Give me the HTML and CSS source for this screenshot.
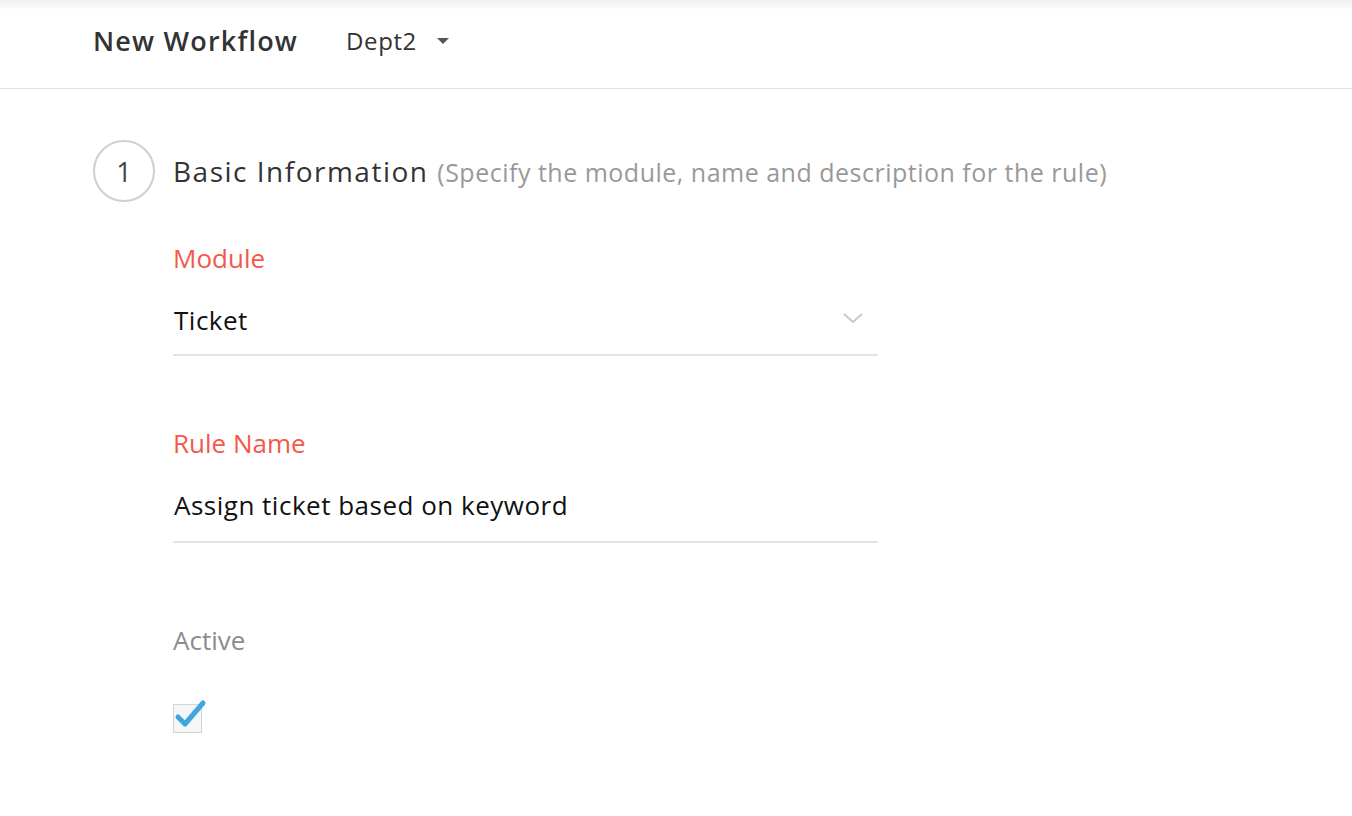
FILE: index.html
```html
<!DOCTYPE html>
<html>
<head>
<meta charset="utf-8">
<link rel="stylesheet" href="styles.css">
</head>
<body>
<header class="topbar">
  <h1 class="title">New Workflow</h1>
  <div class="dept">
    <span>Dept2</span>
    <svg class="caret" width="12" height="6" viewBox="0 0 12 6"><path d="M0 0 L12 0 L6 6 Z" fill="#555"/></svg>
  </div>
</header>
<main class="content">
  <div class="step">
    <div class="step-num">1</div>
    <h2 class="step-title">Basic Information <span class="step-sub">(Specify the module, name and description for the rule)</span></h2>
  </div>
  <div class="fields">
    <div class="field">
      <label class="label req">Module</label>
      <div class="input select">
        <span>Ticket</span>
        <svg class="chev" width="22" height="12" viewBox="0 0 22 12"><path d="M2 2 L11 10 L20 2" fill="none" stroke="#c8c8c8" stroke-width="2"/></svg>
      </div>
    </div>
    <div class="field">
      <label class="label req">Rule Name</label>
      <div class="input name"><span>Assign ticket based on keyword</span></div>
    </div>
    <div class="field">
      <label class="label muted">Active</label>
      <div class="check">
        <svg width="34" height="34" viewBox="0 0 34 34">
          <rect x="0.5" y="5.5" width="28" height="28" fill="#f4f6f8" stroke="#d4d4d4"/>
          <path d="M5 18 L12 25 L30 4" fill="none" stroke="#3fa6e0" stroke-width="5" stroke-linecap="round" stroke-linejoin="round"/>
        </svg>
      </div>
    </div>
  </div>
</main>
</body>
</html>
```

FILE: styles.css
```css
* { box-sizing: border-box; }
body {
  margin: 0;
  font-family: "Open Sans", "Lato", sans-serif;
  color: #333;
  background: #fff;
}
.topbar {
  height: 89px;
  border-bottom: 1px solid #e3e3e3;
  display: flex;
  align-items: center;
  padding: 0 0 8px 93px;
  background: linear-gradient(to bottom, #f0f0f0 0, #fff 10px);
}
.title {
  margin: 0;
  font-size: 27px;
  font-weight: 600;
  color: #333;
  letter-spacing: 1.2px;
}
.dept {
  margin-left: 48px;
  display: flex;
  align-items: center;
  gap: 20px;
  font-size: 24px;
  letter-spacing: 0.6px;
  color: #333;
}
.caret { margin-top: 2px; }
.content {
  padding: 51px 0 0 93px;
}
.step {
  display: flex;
  align-items: center;
  gap: 18px;
}
.step-num {
  width: 62px;
  height: 62px;
  border: 2px solid #cfcfcf;
  border-radius: 50%;
  display: flex;
  align-items: center;
  justify-content: center;
  font-size: 27px;
  color: #444;
}
.step-title {
  margin: 0;
  font-size: 28px;
  font-weight: 400;
  letter-spacing: 1.5px;
  color: #333;
}
.step-sub {
  font-size: 25px;
  letter-spacing: 0.5px;
  color: #999;
}
.fields {
  padding-left: 80px;
  width: 785px;
  margin-top: 41px;
}
.label {
  display: block;
  font-size: 26px;
  line-height: 30px;
}
.req { color: #f4584a; }
.muted { color: #8c8c8c; }
.input {
  margin-top: 31px;
  height: 52px;
  border-bottom: 2px solid #e2e2e8;
  display: flex;
  align-items: flex-start;
  justify-content: space-between;
  font-size: 26px;
  line-height: 33px;
  letter-spacing: 0.5px;
  color: #111;
  padding-left: 1px;
}
.name { height: 54px; }
.select { padding-right: 14px; }
.chev { margin-top: 8px; }
.field + .field { margin-top: 72px; }
.field:last-child { margin-top: 82px; }
.check { margin-top: 44px; }
```
